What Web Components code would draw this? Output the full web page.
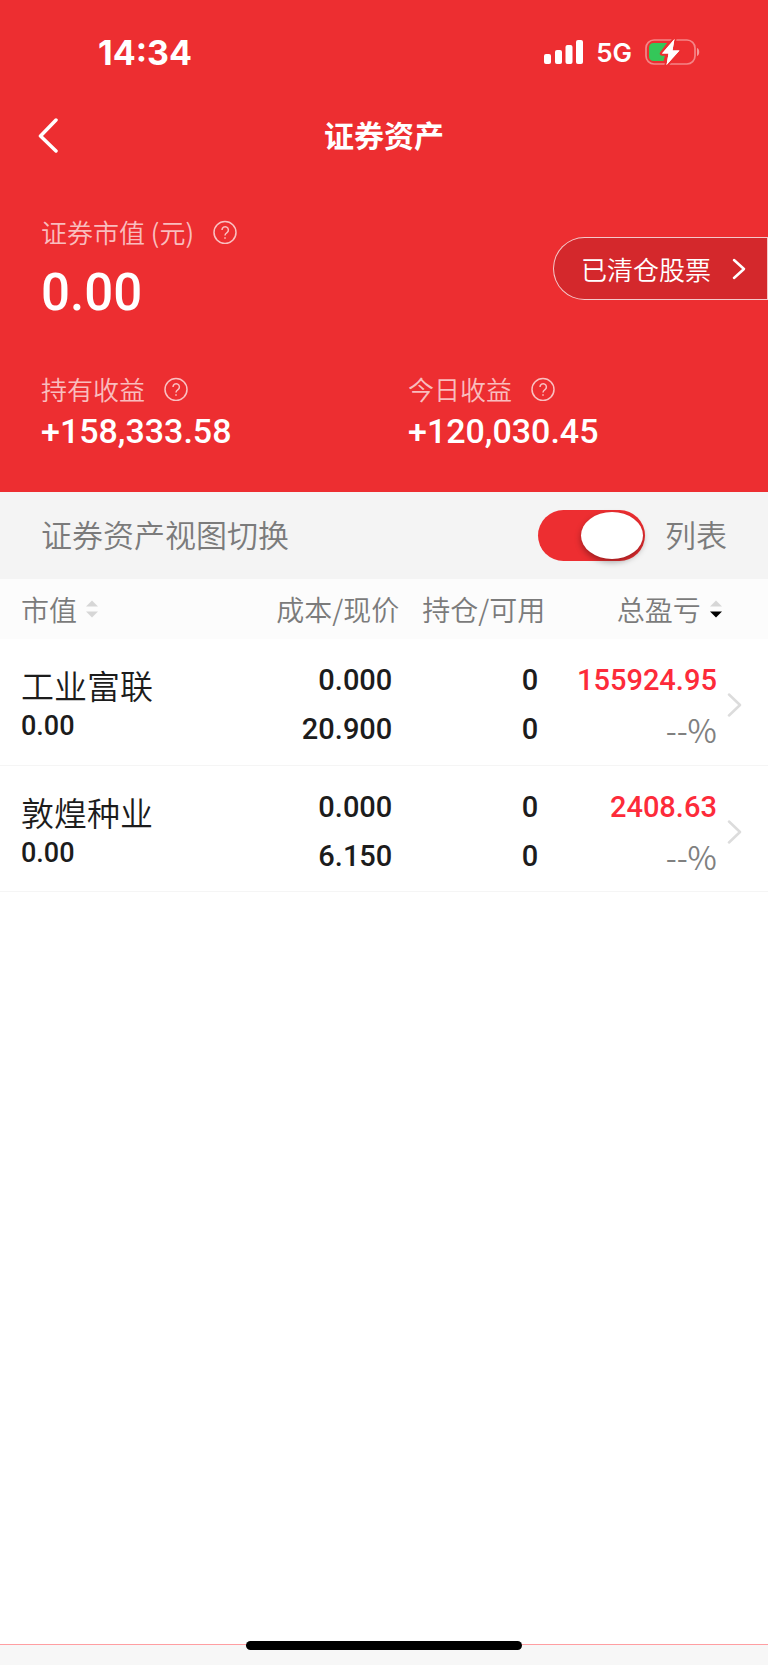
<!DOCTYPE html>
<html lang="zh-CN">
<head>
<meta charset="utf-8">
<meta name="viewport" content="width=device-width, initial-scale=1">
<title>证券资产</title>
<style>
  html, body { margin: 0; }
  body {
    font-family: "Noto Sans CJK SC", sans-serif;
    font-weight: 350;
    color: #1c1c1c;
    background: #fff;
    --brand: #ed2e31;
    --number: Roboto, "Noto Sans CJK SC", sans-serif;
  }
</style>
</head>
<body>
<asset-page>
  <status-bar slot="head" time="14:34" network="5G"></status-bar>
  <nav-bar slot="head">证券资产</nav-bar>
  <asset-summary slot="head">
    <asset-figure slot="total" size="large" value="0.00">证券市值 (元)</asset-figure>
    <pill-link slot="total">已清仓股票</pill-link>
    <asset-figure slot="figures" value="+158,333.58">持有收益</asset-figure>
    <asset-figure slot="figures" value="+120,030.45">今日收益</asset-figure>
  </asset-summary>
  <view-switch state="列表">证券资产视图切换</view-switch>
  <holdings-table></holdings-table>
  <home-indicator slot="foot"></home-indicator>
</asset-page>

<script>
const define = (name, html, setup) => {
  customElements.define(name, class extends HTMLElement {
    constructor() {
      super();
      this.attachShadow({ mode: "open" });
    }
    connectedCallback() {
      const t = document.createElement("template");
      t.innerHTML = "<style>*{box-sizing:border-box}button{font:inherit;color:inherit;background:none;border:0;padding:0;cursor:pointer}svg{display:block}</style>" + html;
      this.shadowRoot.replaceChildren(t.content.cloneNode(true));
      if (setup) setup(this, this.shadowRoot);
    }
  });
};

define("asset-page", `
<style>
  :host { display: flex; flex-direction: column; min-height: 100vh; }
  header { background: var(--brand); color: #fff; }
  main { flex: 1; }
</style>
<header><slot name="head"></slot></header>
<main><slot></slot></main>
<slot name="foot"></slot>`);

define("status-bar", `
<style>
  :host { display: flex; align-items: center; justify-content: space-between; height: 104px; padding: 0 68px 0 98px; font-family: Inter, sans-serif; }
  .time { font-size: 34px; font-weight: 700; }
  .right { display: flex; align-items: center; gap: 13px; }
  .net { font-size: 26px; font-weight: 600; }
</style>
<span class="time"></span>
<div class="right">
  <svg width="39" height="26" viewBox="0 0 39 26" fill="#fff" aria-hidden="true">
    <rect x="0" y="15" width="7" height="10" rx="2"/><rect x="11" y="11" width="7" height="14" rx="2"/>
    <rect x="21.5" y="6" width="7" height="19" rx="2"/><rect x="32" y="1" width="7" height="24" rx="2"/>
  </svg>
  <span class="net"></span>
  <svg width="55" height="28" viewBox="0 0 55 28" aria-hidden="true">
    <rect x="1" y="2" width="49" height="24" rx="8" fill="none" stroke="#fff" stroke-opacity=".42" stroke-width="1.700"/>
    <path d="M52 10v8c3-1 3-7 0-8z" fill="#fff" fill-opacity=".5"/>
    <path d="M8.500 5H22L15 14.500q-1 3 2 3h3L18.500 23H8.500A4.500 4.500 0 0 1 4 18.500v-9A4.500 4.500 0 0 1 8.500 5z" fill="#34c759"/>
    <path d="M29.500 1 17 15.500h6.500L21.500 27 34.500 12.500H27.500z" fill="#fff" stroke="#ed2e31" stroke-width="4" paint-order="stroke" stroke-linejoin="round"/>
    <path d="M29.500 1 17 15.500h6.500L21.500 27 34.500 12.500H27.500z" fill="#fff"/>
  </svg>
</div>`, (el, root) => {
  root.querySelector(".time").textContent = el.getAttribute("time");
  root.querySelector(".net").textContent = el.getAttribute("network");
});

define("nav-bar", `
<style>
  :host { display: grid; grid-template-columns: 1fr auto 1fr; align-items: center; height: 64px; padding: 0 38px; }
  button { justify-self: start; }
  h1 { margin: 0; padding-bottom: 4px; font-size: 30px; line-height: 40px; font-weight: 700; }
</style>
<button type="button" aria-label="返回">
  <svg width="20" height="36" viewBox="0 0 20 36" fill="none" stroke="#fff" stroke-width="3.500" stroke-linecap="round" stroke-linejoin="round"><path d="M18 2 2.500 18 18 33"/></svg>
</button>
<h1><slot></slot></h1>`);

define("asset-summary", `
<style>
  :host { display: block; padding: 44px 0 39px 41px; }
  .total { display: flex; justify-content: space-between; align-items: flex-start; margin-bottom: 35px; }
  .figures { display: grid; grid-template-columns: 1fr 1fr; column-gap: 48px; margin-right: 41px; }
</style>
<div class="total"><slot name="total"></slot></div>
<div class="figures"><slot name="figures"></slot></div>`);

define("asset-figure", `
<style>
  :host { display: block; }
  .label { display: flex; align-items: center; gap: 19px; font-size: 26px; line-height: 40px; color: rgba(255,255,255,.7); }
  .value { font: 500 34px/44px var(--number); }
  :host([size="large"]) .value { font-size: 51px; line-height: 82px; }
</style>
<div class="label"><slot></slot>
  <button type="button" aria-label="说明">
    <svg width="24" height="24" viewBox="0 0 24 24" fill="none" stroke="#fff" stroke-opacity=".7" stroke-width="1.500"><circle cx="12" cy="12.500" r="11"/><path d="M9 10a3.200 3.200 0 1 1 5 2.600q-2 1.300-2 2.900"/><path d="M12 17.300v1.500"/></svg>
  </button>
</div>
<div class="value"></div>`, (el, root) => {
  root.querySelector(".value").textContent = el.getAttribute("value");
});

define("pill-link", `
<style>
  :host { display: block; margin-top: 25px; }
  a { display: flex; align-items: center; gap: 21px; height: 63px; padding: 0 21px 0 27px; font-size: 26px; line-height: 60px; color: #fff; text-decoration: none;
      background: #d4282c; border: 1px solid rgba(255,255,255,.75); border-radius: 32px 0 0 32px; }
</style>
<a href="#cleared"><slot></slot>
  <svg width="14" height="22" viewBox="0 0 14 22" fill="none" stroke="#fff" stroke-width="2.500" stroke-linecap="round" stroke-linejoin="round"><path d="M2 2 12 11 2 20"/></svg>
</a>`);

define("view-switch", `
<style>
  :host { display: block; background: #f4f4f4; color: #7b7b7b; font-size: 31px; line-height: 44px; }
  label { display: flex; align-items: center; height: 87px; padding: 0 41px; }
  span { padding-bottom: 3px; }
  .name { flex: 1; }
  input { appearance: none; width: 107px; height: 51px; margin: 0 20px 0 0; border-radius: 26px; background: #ccc; display: flex; align-items: center; padding: 0 2px; }
  input::before { content: ""; width: 62px; height: 47px; border-radius: 50%; background: #fff; box-shadow: 0 3px 6px rgba(0,0,0,.35); }
  input:checked { background: var(--brand); justify-content: flex-end; }
</style>
<label><span class="name"><slot></slot></span><input type="checkbox" role="switch" checked><span class="state"></span></label>`, (el, root) => {
  root.querySelector(".state").textContent = el.getAttribute("state");
});

define("sort-button", `
<style>
  :host { display: inline-block; }
  button { display: flex; align-items: center; gap: 9px; line-height: 60px; }
  path { fill: #d6d6d6; }
  :host([order="desc"]) .down { fill: #000; }
</style>
<button type="button"><slot></slot>
  <svg width="12" height="18" viewBox="0 0 12 18" aria-hidden="true"><path d="M0 6.500 6 .500 12 6.500z"/><path class="down" d="M0 11.500h12L6 17.500z"/></svg>
</button>`);

const holdings = [
  { name: "工业富联", value: "0.00", cost: "0.000", price: "20.900", held: "0", free: "0", profit: "155924.95", rate: "--%" },
  { name: "敦煌种业", value: "0.00", cost: "0.000", price: "6.150", held: "0", free: "0", profit: "2408.63", rate: "--%" },
];

define("holdings-table", `
<style>
  :host { display: block; }
  table { width: 100%; table-layout: fixed; border-collapse: collapse; }
  th, td { padding: 0; text-align: right; white-space: nowrap; }
  thead { background: #fcfcfc; color: #7b7b7b; font-size: 28px; line-height: 60px; }
  th { font-weight: 350; }
  .name { width: 33%; padding-left: 21px; text-align: left; }
  .cost, .held { width: 19%; }
  .profit { width: 23%; }
  .more { width: 6%; }
  sort-button { vertical-align: top; }
  tbody tr { height: 126px; border-bottom: 1px solid #f5f5f5; }
  tbody td { padding-top: 7px; font: 500 29px/49px var(--number); }
  td.cost, td.held { padding-right: 7px; }
  td.profit { padding-right: 5px; color: #fd2b3a; }
  .title { font: 350 33px/42px "Noto Sans CJK SC", sans-serif; }
  .value { font-size: 27px; line-height: 40px; }
  .rate { font: 350 32px/49px "Noto Sans CJK SC", sans-serif; color: #808080; }
  td a { display: block; padding-left: 5px; }
</style>
<table>
  <thead><tr>
    <th class="name" scope="col"><sort-button>市值</sort-button></th>
    <th class="cost" scope="col">成本/现价</th>
    <th class="held" scope="col">持仓/可用</th>
    <th class="profit" scope="col"><sort-button order="desc">总盈亏</sort-button></th>
    <td class="more"></td>
  </tr></thead>
  <tbody></tbody>
</table>`, (el, root) => {
  root.querySelector("tbody").innerHTML = holdings.map(h => `
    <tr>
      <td class="name"><div class="title">${h.name}</div><div class="value">${h.value}</div></td>
      <td class="cost"><div>${h.cost}</div><div>${h.price}</div></td>
      <td class="held"><div>${h.held}</div><div>${h.free}</div></td>
      <td class="profit"><div>${h.profit}</div><div class="rate">${h.rate}</div></td>
      <td class="more"><a href="#detail" aria-label="${h.name}详情"><svg width="15" height="24" viewBox="0 0 15 24" fill="none" stroke="#dcdcdc" stroke-width="2.500" stroke-linecap="round" stroke-linejoin="round"><path d="M2 1.500 13 12 2 22.500"/></svg></a></td>
    </tr>`).join("");
});

define("home-indicator", `
<style>
  :host { display: block; position: relative; height: 20px; background: #f7f7f7; border-top: 1px solid #ff9ea2; }
  div { position: absolute; top: -4px; left: 32%; right: 32%; height: 9px; border-radius: 5px; background: #000; }
</style>
<div></div>`);
</script>
</body>
</html>
